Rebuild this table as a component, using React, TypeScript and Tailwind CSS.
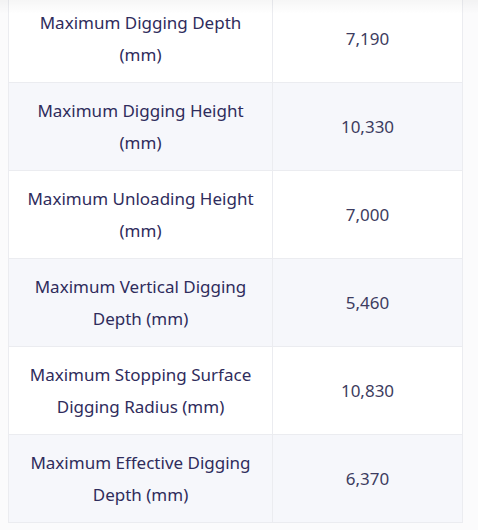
import React from 'react';

interface SpecRow {
  label: string;
  value: string;
}

const rows: SpecRow[] = [
  { label: 'Maximum Digging Depth (mm)', value: '7,190' },
  { label: 'Maximum Digging Height (mm)', value: '10,330' },
  { label: 'Maximum Unloading Height (mm)', value: '7,000' },
  { label: 'Maximum Vertical Digging Depth (mm)', value: '5,460' },
  { label: 'Maximum Stopping Surface Digging Radius (mm)', value: '10,830' },
  { label: 'Maximum Effective Digging Depth (mm)', value: '6,370' },
];

const App: React.FC = () => {
  return (
    <div
      className="relative min-h-[530px] overflow-hidden bg-[#fbfbfc] pl-2 pr-[15px]"
      style={{ fontFamily: '"Noto Sans", "Open Sans", sans-serif' }}
    >
      <table className="-mt-[6px] w-full table-fixed border-collapse border border-[#ebecf0]">
        <colgroup>
          <col className="w-[264px]" />
          <col />
        </colgroup>
        <tbody>
          {rows.map((row, i) => (
            <tr key={row.label} className={i % 2 === 0 ? 'bg-white' : 'bg-[#f6f7fb]'}>
              <td className="border border-[#ebecf0] px-4 pt-3 pb-[11px] text-center text-[17px] leading-8 text-[#2f2c5c]">
                {row.label}
              </td>
              <td className="border border-[#ebecf0] px-4 pt-3 pb-[11px] text-center text-[17px] leading-8 text-[#3d3c60]">
                {row.value}
              </td>
            </tr>
          ))}
        </tbody>
      </table>
      <div className="pointer-events-none absolute inset-x-0 top-0 h-[14px] bg-gradient-to-b from-black/[0.035] to-transparent" />
    </div>
  );
};

export default App;
